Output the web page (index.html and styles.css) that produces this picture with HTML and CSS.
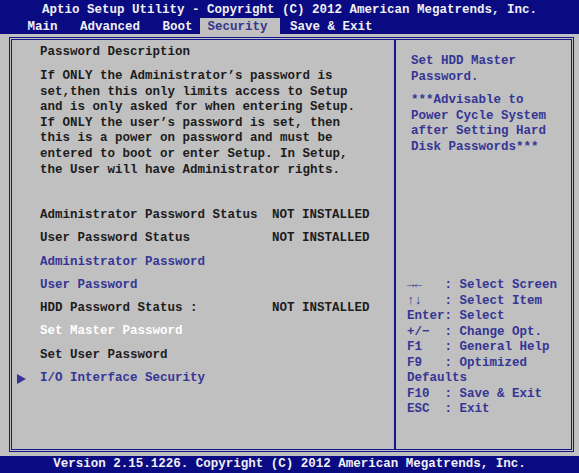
FILE: index.html
```html
<!DOCTYPE html>
<html lang="en">
<head>
<meta charset="utf-8">
<title>Aptio Setup Utility - Security</title>
<link rel="stylesheet" href="styles.css">
</head>
<body>
<div class="screen">
  <header class="topbar">
    <div class="title">Aptio Setup Utility - Copyright (C) 2012 American Megatrends, Inc.</div>
    <nav class="tabs">
      <span class="tab">Main</span>
      <span class="tab">Advanced</span>
      <span class="tab">Boot</span>
      <span class="tab tab-active">Security</span>
      <span class="tab">Save &amp; Exit</span>
    </nav>
  </header>

  <main class="body">
    <div class="frame">
      <section class="left">
        <div class="heading">Password Description</div>
        <p class="desc">If ONLY the Administrator’s password is<br>set,then this only limits access to Setup<br>and is only asked for when entering Setup.<br>If ONLY the user’s password is set, then<br>this is a power on password and must be<br>entered to boot or enter Setup. In Setup,<br>the User will have Administrator rights.</p>

        <div class="items">
          <span></span><span class="label">Administrator Password Status</span><span class="value">NOT INSTALLED</span>
          <span></span><span class="label">User Password Status</span><span class="value">NOT INSTALLED</span>
          <span></span><span class="label link">Administrator Password</span><span></span>
          <span></span><span class="label link">User Password</span><span></span>
          <span></span><span class="label">HDD Password Status :</span><span class="value">NOT INSTALLED</span>
          <span></span><span class="label selected">Set Master Password</span><span></span>
          <span></span><span class="label">Set User Password</span><span></span>
          <span class="marker"></span><span class="label link">I/O Interface Security</span><span></span>
        </div>
      </section>

      <aside class="right">
        <div class="help-text">
          <p class="help-para">Set HDD Master<br>Password.</p>
          <p class="help-para">***Advisable to<br>Power Cycle System<br>after Setting Hard<br>Disk Passwords***</p>
        </div>
        <ul class="keys">
          <li><span class="key">→←</span>: Select Screen</li>
          <li><span class="key">↑↓</span>: Select Item</li>
          <li><span class="key">Enter</span>: Select</li>
          <li><span class="key">+/−</span>: Change Opt.</li>
          <li><span class="key">F1</span>: General Help</li>
          <li><span class="key">F9</span>: Optimized</li>
          <li>Defaults</li>
          <li><span class="key">F10</span>: Save &amp; Exit</li>
          <li><span class="key">ESC</span>: Exit</li>
        </ul>
      </aside>
    </div>
  </main>

  <footer class="footer">Version 2.15.1226. Copyright (C) 2012 American Megatrends, Inc.</footer>
</div>
</body>
</html>
```
FILE: styles.css
```css
html, body {
  margin: 0;
  padding: 0;
}

body {
  background: #c0c0c0;
  font-family: "Courier New", "Liberation Mono", monospace;
  font-weight: bold;
  font-size: 12.5px;
  color: #1c1c1c;
}

.screen {
  width: 579px;
  height: 473px;
  display: flex;
  flex-direction: column;
  overflow: hidden;
}

/* top blue bar: title + menu tabs */
.topbar {
  background: #0a0a82;
  color: #f0f0f4;
  height: 34px;
  flex: none;
}

.title {
  height: 18px;
  line-height: 20px;
  text-align: center;
  white-space: pre;
}

.tabs {
  display: flex;
  height: 16px;
  line-height: 18px;
  padding-left: 20px;
  white-space: pre;
}

.tab {
  padding: 0 7.5px;
}

.tab + .tab {
  margin-left: 7.5px;
}

.tab-active {
  background: #c0c0c0;
  color: #35358f;
  padding-right: 12.5px;
}

.tab + .tab-active {
  margin-left: 0;
}

.tab-active + .tab {
  margin-left: 2.5px;
}

/* main gray area with the double frame */
.body {
  flex: 1;
  box-sizing: border-box;
  padding: 3px 5px 4px 9px;
  min-height: 0;
}

.frame {
  box-sizing: border-box;
  height: 100%;
  border: 3px double #16168c;
  display: flex;
}

.left {
  width: 384px;
  box-sizing: border-box;
  flex: none;
  border-right: 2px solid #16168c;
  padding: 5px 0 0 5px;
}

.heading {
  margin-left: 23px;
  line-height: 15.6px;
}

.desc {
  margin: 8.4px 0 0 23px;
  line-height: 15.6px;
  white-space: nowrap;
}

.items {
  margin-top: 25.8px;
  display: grid;
  grid-template-columns: 23px 232px auto;
  grid-auto-rows: 23.3px;
  line-height: 23.3px;
  white-space: nowrap;
}

.link {
  color: #353595;
}

.selected {
  color: #ffffff;
}

.marker {
  align-self: center;
  width: 0;
  height: 0;
  border-left: 9px solid #353595;
  border-top: 5px solid transparent;
  border-bottom: 5px solid transparent;
}

/* right help pane */
.right {
  flex: 1;
  display: flex;
  flex-direction: column;
  padding: 14px 0 31.5px 11px;
  color: #353595;
  white-space: nowrap;
}

.help-text {
  margin-left: 4px;
}

.help-para {
  margin: 0;
  line-height: 15.6px;
}

.help-para + .help-para {
  margin-top: 7.8px;
}

.keys {
  list-style: none;
  margin: auto 0 0 0;
  padding: 0;
  line-height: 15.5px;
}

.key {
  display: inline-block;
  width: 37.5px;
}

.footer {
  flex: none;
  height: 17px;
  line-height: 17px;
  background: #0a0a82;
  color: #f0f0f4;
  text-align: center;
  white-space: pre;
}
```
